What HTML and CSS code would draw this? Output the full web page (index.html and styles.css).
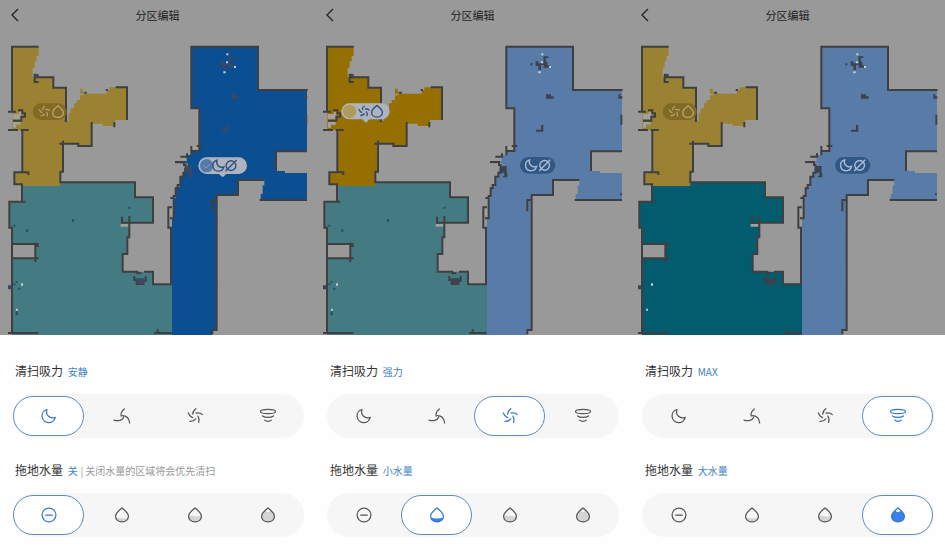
FILE: index.html
```html
<!DOCTYPE html>
<html lang="zh-CN">
<head>
<meta charset="utf-8">
<meta name="viewport" content="width=device-width, initial-scale=1">
<title>分区编辑</title>
<link rel="stylesheet" href="styles.css">
</head>
<body>
<svg class="sprite" aria-hidden="true">
  <symbol id="i-moon" viewBox="0 0 24 24"><path d="M9.500 4.200A8 8 0 1 0 19.500 13.600C13.500 16 7.500 11 9.500 4.200Z"/></symbol>
  <symbol id="i-fan3" viewBox="0 0 24 24"><path d="M14.800 3.500C11.500 6 10.300 9 11 12.200M2.400 17C7 18.500 12.500 17.500 14 13.500M21.200 20.400C20.500 14.500 17 11.500 12.500 11.500"/></symbol>
  <symbol id="i-fan5" viewBox="0 0 24 24">
    <path id="blade" d="M13 3.200Q9.500 5.500 9.200 9.800"/>
    <use href="#blade" transform="rotate(72 12 12)"/>
    <use href="#blade" transform="rotate(144 12 12)"/>
    <use href="#blade" transform="rotate(216 12 12)"/>
    <use href="#blade" transform="rotate(288 12 12)"/>
  </symbol>
  <symbol id="i-storm" viewBox="0 0 24 24"><ellipse cx="12" cy="6.500" rx="9" ry="2.600"/><path d="M5.500 12C8.500 14.300 15.500 14.300 18.500 12M8 17C10 19 14 19 16 17"/></symbol>
  <symbol id="i-off" viewBox="0 0 24 24"><circle cx="12" cy="12" r="8.300"/><path d="M8 12H16"/></symbol>
  <symbol id="i-drop1" viewBox="0 0 24 24"><path class="level" d="M4.800 15C9 16.500 15 16.500 19.200 15C18.500 18.500 15.500 20.300 12 20.300S5.500 18.500 4.800 15Z"/><path d="M12 3.500C9 6 4.300 9.500 4.300 13.500C4.300 17.500 7.500 20.300 12 20.300S19.700 17.500 19.700 13.500C19.700 9.500 15 6 12 3.500Z"/></symbol>
  <symbol id="i-drop2" viewBox="0 0 24 24"><path class="level" d="M4.500 13C9 12 15 15 19.500 13C19.500 18 16 20 12 20S4.500 18 4.500 13Z"/><path d="M12 3.500C9 6 4.300 9.500 4.300 13.500C4.300 17.500 7.500 20.300 12 20.300S19.700 17.500 19.700 13.500C19.700 9.500 15 6 12 3.500Z"/></symbol>
  <symbol id="i-drop3" viewBox="0 0 24 24"><path class="level" d="M9 7C10 9 14 9 15 7C18.500 10 19.700 12 19.700 13.500C19.700 18 16 20.300 12 20.300S4.300 18 4.300 13.500C4.300 12 5.500 10 9 7Z"/><path d="M12 3.500C9 6 4.300 9.500 4.300 13.500C4.300 17.500 7.500 20.300 12 20.300S19.700 17.500 19.700 13.500C19.700 9.500 15 6 12 3.500Z"/></symbol>
  <symbol id="i-none" viewBox="0 0 24 24"><circle cx="12" cy="12" r="7"/><path d="M4 20L20 4"/></symbol>
  <symbol id="rooms" viewBox="0 96 945 909">
    <path class="teal" d="M66 553H181V547H405V592H459V668H390V712H382V762H368V815H459V853H516V1005H36V683H28V605H66ZM38 732V775H105V732Z"/>
    <path class="yellow" d="M36 140H116V168H110V184H104V203H98V230H160V263H198V362H206V340H212V325H222V310H230V300H240V286H250V281H240V266H248V275H256V281H320V270H328V262H381V360H345V378H308V371H275V438H235V431H189V515H181V558H66V553H43V517H67V390H37Z"/>
    <path class="blue" d="M574 140H774V270H921V454H828V513H855V519H921V600H782V582H788V556H793V540H714V585H650V990H637V1005H516V655H520V595H527V560H540V530H552V505H563V490H525V484H560V465H574V453H598V325H574Z"/>
    <path class="floor" d="M38 342H56V335H64V358H38ZM39 366H62V374H48V383H39ZM509 623H517V646H509ZM575 438H592V448H575ZM362 672H386V680H362ZM100 215H104V230H98Z"/>
    <path class="wall" d="M116 140H36V332M24 335H48M54 331H67V340H75V350H64V362H39M24 390H54M62 390H86M67 388V515M110 224H104V246H116M104 232H160V263H198V365M347 262H381V360M343 366V382M275 366V438H235V431H178M189 422V515H181V547H405V592H459V668H366V650M85 525V517H43V553H66V605H28V683H36V1000M76 605H66M24 863H36M24 999H115M36 732H116M106 728V786M106 738H116M36 775H116M388 648V712H382V762H368V815H415M432 815H459V853H513V683H505V622H516M511 594H521V655H510M521 594V588H527V565H533V555H541V530H550V518H557V495H552V486H525M541 470H561V460M574 466V438M590 438H607M574 453H598V325H574V140H774V270H923M921 454H828V513M793 540H714V585H650V990H637V1003M637 634V600H648M779 600H921M462 999H515M473 988V999M403 828V840H410V852H430V842H437V828M409 820H424"/>
    <path class="spot" d="M555 498H575V518H555ZM568 518H577V532H564V528H568ZM693 283H708V289H716V296H693ZM678 375H685V395H663V389H678ZM910 283H916V289H922V296H910ZM916 344H922V374H916ZM646 190H652V196H646ZM662 184H670V190H686V180H693V186H697V196H703V203H686V195H678V210H670V198H662ZM685 169H700V174H692V181H685ZM915 580H921V586H915ZM253 275H261V281H253ZM317 267H324V273H317ZM194 360H200V366H194ZM24 856H36V868H24ZM106 222H116V232H106ZM407 835H433V852H412V842H407Z"/>
    <path class="speck" d="M216 657H222V665H216ZM385 620H392V626H385ZM78 688H85V695H78ZM40 674H46V680H40ZM47 843H53V849H47ZM40 850H46V856H40ZM55 863H61V870H55ZM47 934H54V946H47Z"/>
    <path class="glint" d="M679 160H685V166H679ZM670 214H677V220H670ZM702 198H708V204H702ZM678 184H684V190H678ZM63 850H69V857H63ZM48 926H54V932H48Z"/>
  </symbol>
</svg>

<main class="screens">
  <section class="screen pick-blue">
    <header class="bar">
      <button class="back" type="button" aria-label="返回"><svg viewBox="0 0 12 16"><path d="M10 2L4 8L10 14"/></svg></button>
      <h1>分区编辑</h1>
    </header>
    <svg class="map" viewBox="0 96 945 909" role="img" aria-label="房间地图">
      <use href="#rooms" x="0" y="96" width="945" height="909"/>
      <g class="chip chip-yellow"><rect x="98" y="310" width="102" height="50" rx="25"/><use href="#i-fan5" x="110" y="312" width="46" height="46"/><use href="#i-drop1" x="149" y="310" width="50" height="50"/></g>
      <g class="chip chip-on"><path d="M620 472H716A25 25 0 0 1 716 522H679L668 532L657 522H620A25 25 0 0 1 620 472Z"/><circle class="tick-blue" cx="620" cy="497" r="20"/><path class="tick" d="M611 497L618 504L630 492"/><use href="#i-moon" x="631" y="472" width="50" height="50"/><use href="#i-none" x="668" y="472" width="50" height="50"/></g>
    </svg>
    <div class="sheet">
      <div class="setting">
        <h2 id="s1">清扫吸力 <b>安静</b></h2>
        <div class="options" role="radiogroup" aria-labelledby="s1">
          <label><input type="radio" name="s1" aria-label="安静" checked><svg><use href="#i-moon"/></svg></label>
          <label><input type="radio" name="s1" aria-label="标准"><svg><use href="#i-fan3"/></svg></label>
          <label><input type="radio" name="s1" aria-label="强力"><svg><use href="#i-fan5"/></svg></label>
          <label><input type="radio" name="s1" aria-label="MAX"><svg><use href="#i-storm"/></svg></label>
        </div>
      </div>
      <div class="setting">
        <h2 id="w1">拖地水量 <b>关</b> <small>| 关闭水量的区域将会优先清扫</small></h2>
        <div class="options" role="radiogroup" aria-labelledby="w1">
          <label><input type="radio" name="w1" aria-label="关" checked><svg><use href="#i-off"/></svg></label>
          <label><input type="radio" name="w1" aria-label="小水量"><svg><use href="#i-drop1"/></svg></label>
          <label><input type="radio" name="w1" aria-label="中水量"><svg><use href="#i-drop2"/></svg></label>
          <label><input type="radio" name="w1" aria-label="大水量"><svg><use href="#i-drop3"/></svg></label>
        </div>
      </div>
    </div>
  </section>

  <section class="screen pick-yellow">
    <header class="bar">
      <button class="back" type="button" aria-label="返回"><svg viewBox="0 0 12 16"><path d="M10 2L4 8L10 14"/></svg></button>
      <h1>分区编辑</h1>
    </header>
    <svg class="map" viewBox="0 96 945 909" role="img" aria-label="房间地图">
      <use href="#rooms" x="0" y="96" width="945" height="909"/>
      <g class="chip chip-on"><path d="M103 310H200A24 24 0 0 1 200 358H163L153 368L142 358H103A24 24 0 0 1 103 310Z"/><circle class="tick-yellow" cx="104" cy="334" r="20"/><path class="tick" d="M95 334L102 341L114 329"/><use href="#i-fan5" x="124" y="311" width="46" height="46"/><use href="#i-drop1" x="161" y="309" width="50" height="50"/></g>
      <g class="chip chip-blue"><rect x="615" y="471" width="106" height="50" rx="25"/><use href="#i-moon" x="624" y="471" width="50" height="50"/><use href="#i-none" x="664" y="471" width="50" height="50"/></g>
    </svg>
    <div class="sheet">
      <div class="setting">
        <h2 id="s2">清扫吸力 <b>强力</b></h2>
        <div class="options" role="radiogroup" aria-labelledby="s2">
          <label><input type="radio" name="s2" aria-label="安静"><svg><use href="#i-moon"/></svg></label>
          <label><input type="radio" name="s2" aria-label="标准"><svg><use href="#i-fan3"/></svg></label>
          <label><input type="radio" name="s2" aria-label="强力" checked><svg><use href="#i-fan5"/></svg></label>
          <label><input type="radio" name="s2" aria-label="MAX"><svg><use href="#i-storm"/></svg></label>
        </div>
      </div>
      <div class="setting">
        <h2 id="w2">拖地水量 <b>小水量</b></h2>
        <div class="options" role="radiogroup" aria-labelledby="w2">
          <label><input type="radio" name="w2" aria-label="关"><svg><use href="#i-off"/></svg></label>
          <label><input type="radio" name="w2" aria-label="小水量" checked><svg><use href="#i-drop1"/></svg></label>
          <label><input type="radio" name="w2" aria-label="中水量"><svg><use href="#i-drop2"/></svg></label>
          <label><input type="radio" name="w2" aria-label="大水量"><svg><use href="#i-drop3"/></svg></label>
        </div>
      </div>
    </div>
  </section>

  <section class="screen pick-teal">
    <header class="bar">
      <button class="back" type="button" aria-label="返回"><svg viewBox="0 0 12 16"><path d="M10 2L4 8L10 14"/></svg></button>
      <h1>分区编辑</h1>
    </header>
    <svg class="map" viewBox="0 96 945 909" role="img" aria-label="房间地图">
      <use href="#rooms" x="0" y="96" width="945" height="909"/>
      <g class="chip chip-yellow"><rect x="98" y="310" width="102" height="50" rx="25"/><use href="#i-fan5" x="110" y="312" width="46" height="46"/><use href="#i-drop1" x="149" y="310" width="50" height="50"/></g>
      <g class="chip chip-blue"><rect x="615" y="471" width="106" height="50" rx="25"/><use href="#i-moon" x="624" y="471" width="50" height="50"/><use href="#i-none" x="664" y="471" width="50" height="50"/></g>
    </svg>
    <div class="sheet">
      <div class="setting">
        <h2 id="s3">清扫吸力 <b>MAX</b></h2>
        <div class="options" role="radiogroup" aria-labelledby="s3">
          <label><input type="radio" name="s3" aria-label="安静"><svg><use href="#i-moon"/></svg></label>
          <label><input type="radio" name="s3" aria-label="标准"><svg><use href="#i-fan3"/></svg></label>
          <label><input type="radio" name="s3" aria-label="强力"><svg><use href="#i-fan5"/></svg></label>
          <label><input type="radio" name="s3" aria-label="MAX" checked><svg><use href="#i-storm"/></svg></label>
        </div>
      </div>
      <div class="setting">
        <h2 id="w3">拖地水量 <b>大水量</b></h2>
        <div class="options" role="radiogroup" aria-labelledby="w3">
          <label><input type="radio" name="w3" aria-label="关"><svg><use href="#i-off"/></svg></label>
          <label><input type="radio" name="w3" aria-label="小水量"><svg><use href="#i-drop1"/></svg></label>
          <label><input type="radio" name="w3" aria-label="中水量"><svg><use href="#i-drop2"/></svg></label>
          <label><input type="radio" name="w3" aria-label="大水量" checked><svg><use href="#i-drop3"/></svg></label>
        </div>
      </div>
    </div>
  </section>
</main>
</body>
</html>
```
FILE: styles.css
```css
* { box-sizing: border-box; }

body {
  margin: 0;
  background: #fefefe;
  color: #333;
  font-family: "Noto Sans CJK SC", "Noto Sans", sans-serif;
}

.sprite {
  position: absolute;
  width: 0;
  height: 0;
}

.screens {
  display: grid;
  grid-template-columns: repeat(3, 1fr);
}

.screen {
  --yellow: #9a8232;
  --teal: #447b82;
  --blue: #587ca7;
  --speck: #24545f;
  --spot: #3b4250;
  --glint: #c4ccd2;
  background: #999;
}

.pick-blue { --blue: #0b4f92; --spot: #3c4861; }
.pick-yellow { --yellow: #957000; }
.pick-teal { --teal: #025c6d; --speck: #025c6d; }

.bar {
  display: grid;
  grid-template-columns: 32px 1fr 32px;
  align-items: center;
  height: 32px;
  padding-bottom: 2px;
}

.bar h1 {
  margin: 0;
  color: #222;
  font-size: 11px;
  font-weight: 400;
  line-height: 16px;
  text-align: center;
}

.back {
  display: flex;
  padding: 0 0 0 8px;
  border: 0;
  background: none;
}

.back svg {
  width: 12px;
  height: 16px;
  fill: none;
  stroke: #222;
  stroke-width: 1.3;
}

.map {
  display: block;
  width: 100%;
  height: auto;
}

.yellow { fill: var(--yellow); }
.teal { fill: var(--teal); fill-rule: evenodd; }
.blue { fill: var(--blue); }
.floor { fill: #a3a19d; }
.wall { fill: none; stroke: #3f3f42; stroke-width: 6; }
.spot { fill: var(--spot); }
.speck { fill: var(--speck); }
.glint { fill: var(--glint); }

.chip { fill: none; stroke-width: 2; }
.chip rect, .chip > path:first-child { stroke: none; }
.chip-yellow { stroke: #b7a368; }
.chip-yellow rect { fill: #806a24; }
.chip-blue { stroke: #a9bdd7; }
.chip-blue rect { fill: #315784; }
.chip-on { stroke: #33517f; }
.chip-on > path:first-child { fill: #aeb4bf; }
.tick-blue { fill: #5679aa; stroke: none; }
.tick-yellow { fill: #b29a55; stroke: none; }
.chip .tick { stroke: #8d99a8; stroke-width: 3; }

.sheet {
  display: grid;
  gap: 22px;
  padding: 26px 11px 13px 12px;
  background: #fefefe;
}

.setting {
  display: grid;
  gap: 12px;
}

.setting h2 {
  margin: 0;
  padding-left: 3px;
  font-size: 12px;
  font-weight: 400;
  line-height: 20px;
  white-space: nowrap;
}

.setting b {
  margin-left: 2px;
  color: #4383c4;
  font-size: 10px;
  font-weight: 400;
}

.setting small {
  color: #999;
  font-size: 10px;
}

.options {
  display: grid;
  grid-template-columns: repeat(4, 1fr);
  border-radius: 22px;
  background: #f6f6f6;
}

.options label {
  position: relative;
  display: grid;
  place-items: center;
  height: 40px;
  margin: 2px 1px;
  border: 1px solid transparent;
  border-radius: 20px;
  color: #555;
}

.options input {
  position: absolute;
  inset: 0;
  margin: 0;
  opacity: 0;
}

.options label:has(:checked) {
  border-color: #5f8bb2;
  background: #fefefe;
  color: #3577cf;
}

.options svg {
  width: 20px;
  height: 20px;
  fill: none;
  stroke: currentColor;
  stroke-width: 1.5;
  stroke-linecap: round;
  stroke-linejoin: round;
}

.level {
  fill: var(--level, none);
  stroke: none;
}

.options { --level: #d4d4d4; }
.options label:has(:checked) { --level: #3980ea; }
```
